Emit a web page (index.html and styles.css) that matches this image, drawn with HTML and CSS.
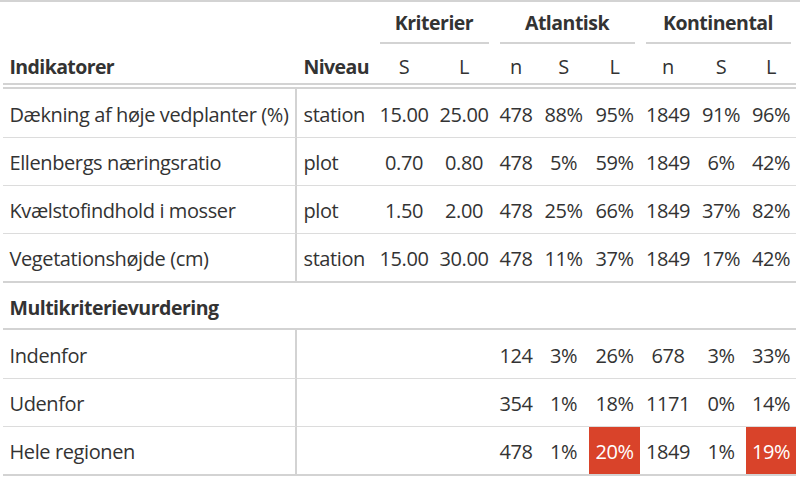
FILE: index.html
```html
<!DOCTYPE html>
<html lang="da">
<head>
<meta charset="utf-8">
<title>Indikatorer</title>
<link rel="stylesheet" href="styles.css">
</head>
<body>
<div class="wrap">
<table class="gt">
<colgroup>
<col class="c-stub"><col class="c-niv"><col class="c-k"><col class="c-k"><col class="c-an"><col class="c-p"><col class="c-p"><col class="c-kn"><col class="c-q"><col class="c-q">
</colgroup>
<thead>
<tr class="spanrow">
<th class="head-left" rowspan="2">Indikatorer</th>
<th class="head-left" rowspan="2">Niveau</th>
<th class="spanner" colspan="2"><div class="spanner-label">Kriterier</div></th>
<th class="spanner" colspan="3"><div class="spanner-label">Atlantisk</div></th>
<th class="spanner" colspan="3"><div class="spanner-label">Kontinental</div></th>
</tr>
<tr class="labelrow">
<th>S</th><th>L</th><th>n</th><th>S</th><th>L</th><th>n</th><th>S</th><th>L</th>
</tr>
</thead>
<tbody>
<tr class="first"><td class="stub">Dækning af høje vedplanter (%)</td><td class="txt">station</td><td>15.00</td><td>25.00</td><td>478</td><td>88%</td><td>95%</td><td>1849</td><td>91%</td><td>96%</td></tr>
<tr><td class="stub">Ellenbergs næringsratio</td><td class="txt">plot</td><td>0.70</td><td>0.80</td><td>478</td><td>5%</td><td>59%</td><td>1849</td><td>6%</td><td>42%</td></tr>
<tr><td class="stub">Kvælstofindhold i mosser</td><td class="txt">plot</td><td>1.50</td><td>2.00</td><td>478</td><td>25%</td><td>66%</td><td>1849</td><td>37%</td><td>82%</td></tr>
<tr><td class="stub">Vegetationshøjde (cm)</td><td class="txt">station</td><td>15.00</td><td>30.00</td><td>478</td><td>11%</td><td>37%</td><td>1849</td><td>17%</td><td>42%</td></tr>
<tr class="group"><td colspan="10">Multikriterievurdering</td></tr>
<tr class="first"><td class="stub">Indenfor</td><td class="txt"></td><td></td><td></td><td>124</td><td>3%</td><td>26%</td><td>678</td><td>3%</td><td>33%</td></tr>
<tr><td class="stub">Udenfor</td><td class="txt"></td><td></td><td></td><td>354</td><td>1%</td><td>18%</td><td>1171</td><td>0%</td><td>14%</td></tr>
<tr class="last"><td class="stub">Hele regionen</td><td class="txt"></td><td></td><td></td><td>478</td><td>1%</td><td class="hot">20%</td><td>1849</td><td>1%</td><td class="hot">19%</td></tr>
</tbody>
</table>
</div>
</body>
</html>
```

FILE: styles.css
```css
html, body {
  margin: 0;
  padding: 0;
  background: #ffffff;
  overflow: hidden;
}

body {
  font-family: "Open Sans", "Noto Sans", sans-serif;
  font-size: 20px;
  letter-spacing: -0.4px;
  color: #333333;
}

.wrap {
  border-top: 2px solid #D3D3D3;
  padding-left: 3px;
}

.gt {
  table-layout: fixed;
  border-collapse: separate;
  border-spacing: 0;
  width: 793px;
}

.c-stub { width: 294px; }
.c-niv { width: 77px; }
.c-k { width: 60px; }
.c-an { width: 44px; }
.c-p { width: 51px; }
.c-kn { width: 56px; }
.c-q { width: 50px; }

th, td {
  line-height: 27px;
  white-space: nowrap;
}

.spanner {
  padding: 6.5px 5.5px 0 5.5px;
  vertical-align: bottom;
}

.spanner-label {
  font-weight: bold;
  font-size: 19.5px;
  letter-spacing: -0.5px;
  text-align: center;
  padding-bottom: 6px;
  border-bottom: 2px solid #D3D3D3;
}

.head-left {
  text-align: left;
  font-weight: bold;
  font-size: 19.5px;
  letter-spacing: -0.6px;
  vertical-align: bottom;
  padding: 0 6.5px 3.5px 6.5px;
  border-bottom: 6px double #D3D3D3;
}

.labelrow th {
  font-weight: normal;
  text-align: center;
  vertical-align: bottom;
  padding: 9px 4px 3.5px 4px;
  border-bottom: 6px double #D3D3D3;
}

tbody td {
  text-align: center;
  padding: 11px 4px 9px 4px;
  border-top: 1px solid #DCDCDC;
}

tbody tr.first td {
  border-top: none;
  padding-top: 11.5px;
  padding-bottom: 9.5px;
}

tbody td.stub {
  text-align: left;
  padding-left: 6.5px;
  border-right: 2px solid #D3D3D3;
}

tbody td.txt {
  text-align: left;
  padding-left: 6.5px;
}

tbody tr.group td {
  font-weight: bold;
  font-size: 19.5px;
  letter-spacing: -0.5px;
  text-align: left;
  padding: 11px 6.5px 7px 6.5px;
  border-top: 2px solid #D3D3D3;
  border-bottom: 2px solid #D3D3D3;
}

tbody tr.last td {
  border-bottom: 2px solid #D3D3D3;
}

tbody td.hot {
  background: #D9432A;
  color: #FFFFFF;
}
```
